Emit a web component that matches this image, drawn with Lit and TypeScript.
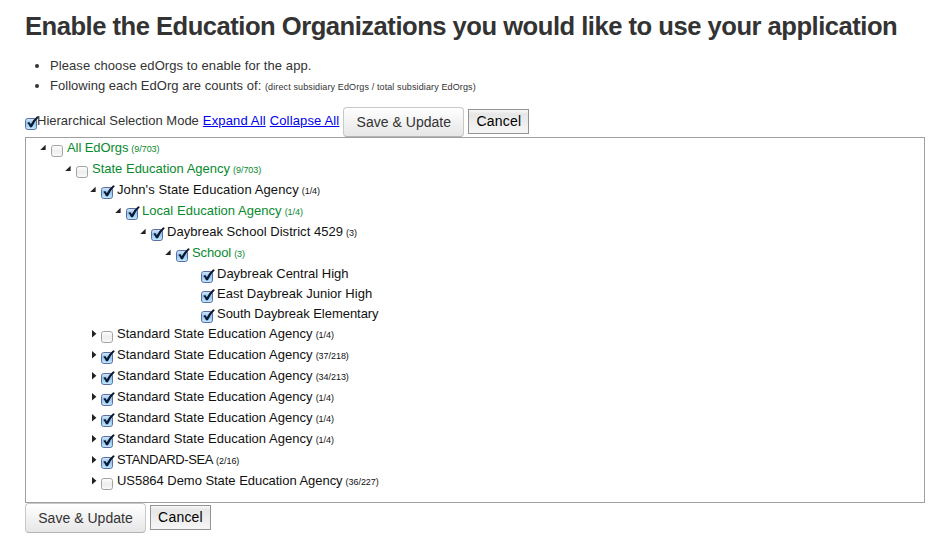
import { LitElement, html, css, svg } from "lit";
import { customElement, property } from "lit/decorators.js";
import { classMap } from "lit/directives/class-map.js";
import { styleMap } from "lit/directives/style-map.js";

interface Org {
  name: string;
  level: number;
  count?: string;
  checked?: boolean;
  group?: boolean;
  state?: "open" | "closed";
  tracking?: number;
}

const ORGS: Org[] = [
  { name: "All EdOrgs", level: 0, count: "(9/703)", group: true, state: "open", tracking: -0.08 },
  { name: "State Education Agency", level: 1, count: "(9/703)", group: true, state: "open" },
  { name: "John's State Education Agency", level: 2, count: "(1/4)", checked: true, state: "open", tracking: 0.1 },
  { name: "Local Education Agency", level: 3, count: "(1/4)", checked: true, group: true, state: "open", tracking: 0.04 },
  { name: "Daybreak School District 4529", level: 4, count: "(3)", checked: true, state: "open", tracking: 0.04 },
  { name: "School", level: 5, count: "(3)", checked: true, group: true, state: "open", tracking: -0.1 },
  { name: "Daybreak Central High", level: 6, checked: true },
  { name: "East Daybreak Junior High", level: 6, checked: true, tracking: 0.02 },
  { name: "South Daybreak Elementary", level: 6, checked: true, tracking: -0.04 },
  { name: "Standard State Education Agency", level: 2, count: "(1/4)", state: "closed", tracking: 0.04 },
  { name: "Standard State Education Agency", level: 2, count: "(37/218)", checked: true, state: "closed", tracking: 0.04 },
  { name: "Standard State Education Agency", level: 2, count: "(34/213)", checked: true, state: "closed", tracking: 0.04 },
  { name: "Standard State Education Agency", level: 2, count: "(1/4)", checked: true, state: "closed", tracking: 0.04 },
  { name: "Standard State Education Agency", level: 2, count: "(1/4)", checked: true, state: "closed", tracking: 0.04 },
  { name: "Standard State Education Agency", level: 2, count: "(1/4)", checked: true, state: "closed", tracking: 0.04 },
  { name: "STANDARD-SEA", level: 2, count: "(2/16)", checked: true, state: "closed", tracking: -0.4 },
  { name: "US5864 Demo State Education Agency", level: 2, count: "(36/227)", state: "closed", tracking: -0.04 },
];

@customElement("check-mark")
export class CheckMark extends LitElement {
  @property({ type: Boolean }) checked = false;

  static styles = css`
    :host { display: block; width: 14px; height: 15px; flex: none; }
    svg { display: block; }
  `;

  render() {
    return html`<svg width="14" height="15" viewBox="0 0 14 15">
      <defs>
        <linearGradient id="on" x1="0" y1="0" x2="0" y2="1">
          <stop offset="0" stop-color="#d8eafa" />
          <stop offset=".45" stop-color="#93c3f0" />
          <stop offset="1" stop-color="#c4ecff" />
        </linearGradient>
        <linearGradient id="off" x1="0" y1="0" x2="0" y2="1">
          <stop offset="0" stop-color="#ffffff" />
          <stop offset=".5" stop-color="#eeeeee" />
          <stop offset="1" stop-color="#fafafa" />
        </linearGradient>
      </defs>
      ${this.checked
        ? svg`<rect x=".5" y="2.5" width="11" height="11" rx="2.3" fill="url(#on)" stroke="#5a6fa5" />
            <path d="M2.3 6.8 L4.3 6 L5.8 8.2 Q8.6 3 12.2 .2 L13.9 .9 Q9.6 5.2 6.9 11.3 L5 11.3 Q4.1 8.8 2.3 6.8 Z" fill="#0b1930" />`
        : svg`<rect x=".5" y="2.5" width="11" height="11" rx="2.3" fill="url(#off)" stroke="#a3a3a3" />`}
    </svg>`;
  }
}

@customElement("form-actions")
export class FormActions extends LitElement {
  static styles = css`
    :host { display: flex; align-items: flex-start; gap: 4px; }
    button {
      box-sizing: border-box;
      margin: 0;
      padding: 0;
      font-family: "Liberation Sans", Arial, sans-serif;
      font-size: 14px;
      white-space: nowrap;
    }
    .save {
      width: 121px;
      height: 30px;
      border: 1px solid #c8c8c8;
      border-bottom-color: #b3b3b3;
      border-radius: 4px;
      background: linear-gradient(#ffffff, #e6e6e6);
      color: #333;
      letter-spacing: .03px;
    }
    .cancel {
      width: 61px;
      height: 25px;
      margin-top: 2px;
      padding-bottom: 2px;
      border: 1px solid #949494;
      background: linear-gradient(#f8f8f8 0, #e6e6e6 18%, #f6f6f6 100%);
      color: #000;
      letter-spacing: .2px;
    }
  `;

  render() {
    return html`<button class="save">Save &amp; Update</button><button class="cancel">Cancel</button>`;
  }
}

@customElement("app-root")
export class AppRoot extends LitElement {
  static styles = css`
    :host {
      display: block;
      box-sizing: border-box;
      height: 551px;
      padding: 8px 26px 0 25px;
      overflow: hidden;
      background: #fff;
      color: #333;
      font-family: "Liberation Sans", Arial, sans-serif;
      font-size: 13px;
      line-height: 20px;
    }
    h1 {
      margin: 0;
      font-size: 25.6px;
      line-height: 36px;
      letter-spacing: -.5px;
      white-space: nowrap;
    }
    ul { margin: 12px 0 0; padding: 0 0 0 25px; }
    li { height: 20px; white-space: nowrap; letter-spacing: .08px; }
    .counts { letter-spacing: .03px; }
    .note { font-size: 9px; letter-spacing: .12px; }
    .bar { display: flex; height: 30px; margin-top: 11px; white-space: nowrap; }
    .bar check-mark { margin-top: 9px; margin-right: -2px; }
    .label { margin-top: 4px; }
    .link { margin: 4px 0 0 4px; color: #0000ee; text-decoration: underline; letter-spacing: .14px; }
    .bar form-actions { margin-left: 4px; }
    .tree {
      box-sizing: border-box;
      width: 900px;
      height: 366px;
      border: 1px solid #a0a0a0;
    }
    .row { display: flex; height: 21px; color: #111; white-space: nowrap; }
    .row.leaf { height: 20px; }
    .row.group { color: #078a2e; }
    .arrow { width: 12px; height: 21px; flex: none; }
    .row check-mark { margin-top: 5px; }
    .name { margin-left: 2px; }
    .count { margin: 1px 0 0 3px; font-size: 9px; letter-spacing: -.05px; }
  `;

  private row(o: Org) {
    return html`<div
      class=${classMap({ row: true, leaf: !o.state, group: !!o.group })}
      style=${styleMap({ paddingLeft: `${13 + o.level * 25}px` })}
    >
      <svg class="arrow" viewBox="0 0 12 21">
        ${o.state === "open" ? svg`<path d="M6.6 6.8 V12 H1.2 Z" fill="#222" />` : ""}
        ${o.state === "closed" ? svg`<path d="M3 6 L7.4 9.7 L3 13.4 Z" fill="#222" />` : ""}
      </svg>
      <check-mark ?checked=${!!o.checked}></check-mark>
      <span class="name" style=${styleMap({ letterSpacing: `${o.tracking ?? 0}px` })}>${o.name}</span>
      ${o.count ? html`<span class="count">${o.count}</span>` : ""}
    </div>`;
  }

  render() {
    return html`
      <h1>Enable the Education Organizations you would like to use your application</h1>
      <ul>
        <li>Please choose edOrgs to enable for the app.</li>
        <li class="counts">Following each EdOrg are counts of: <span class="note">(direct subsidiary EdOrgs / total subsidiary EdOrgs)</span></li>
      </ul>
      <div class="bar">
        <check-mark checked></check-mark>
        <span class="label">Hierarchical Selection Mode</span>
        <a class="link">Expand All</a>
        <a class="link">Collapse All</a>
        <form-actions></form-actions>
      </div>
      <div class="tree">${ORGS.map((o) => this.row(o))}</div>
      <form-actions></form-actions>
    `;
  }
}
